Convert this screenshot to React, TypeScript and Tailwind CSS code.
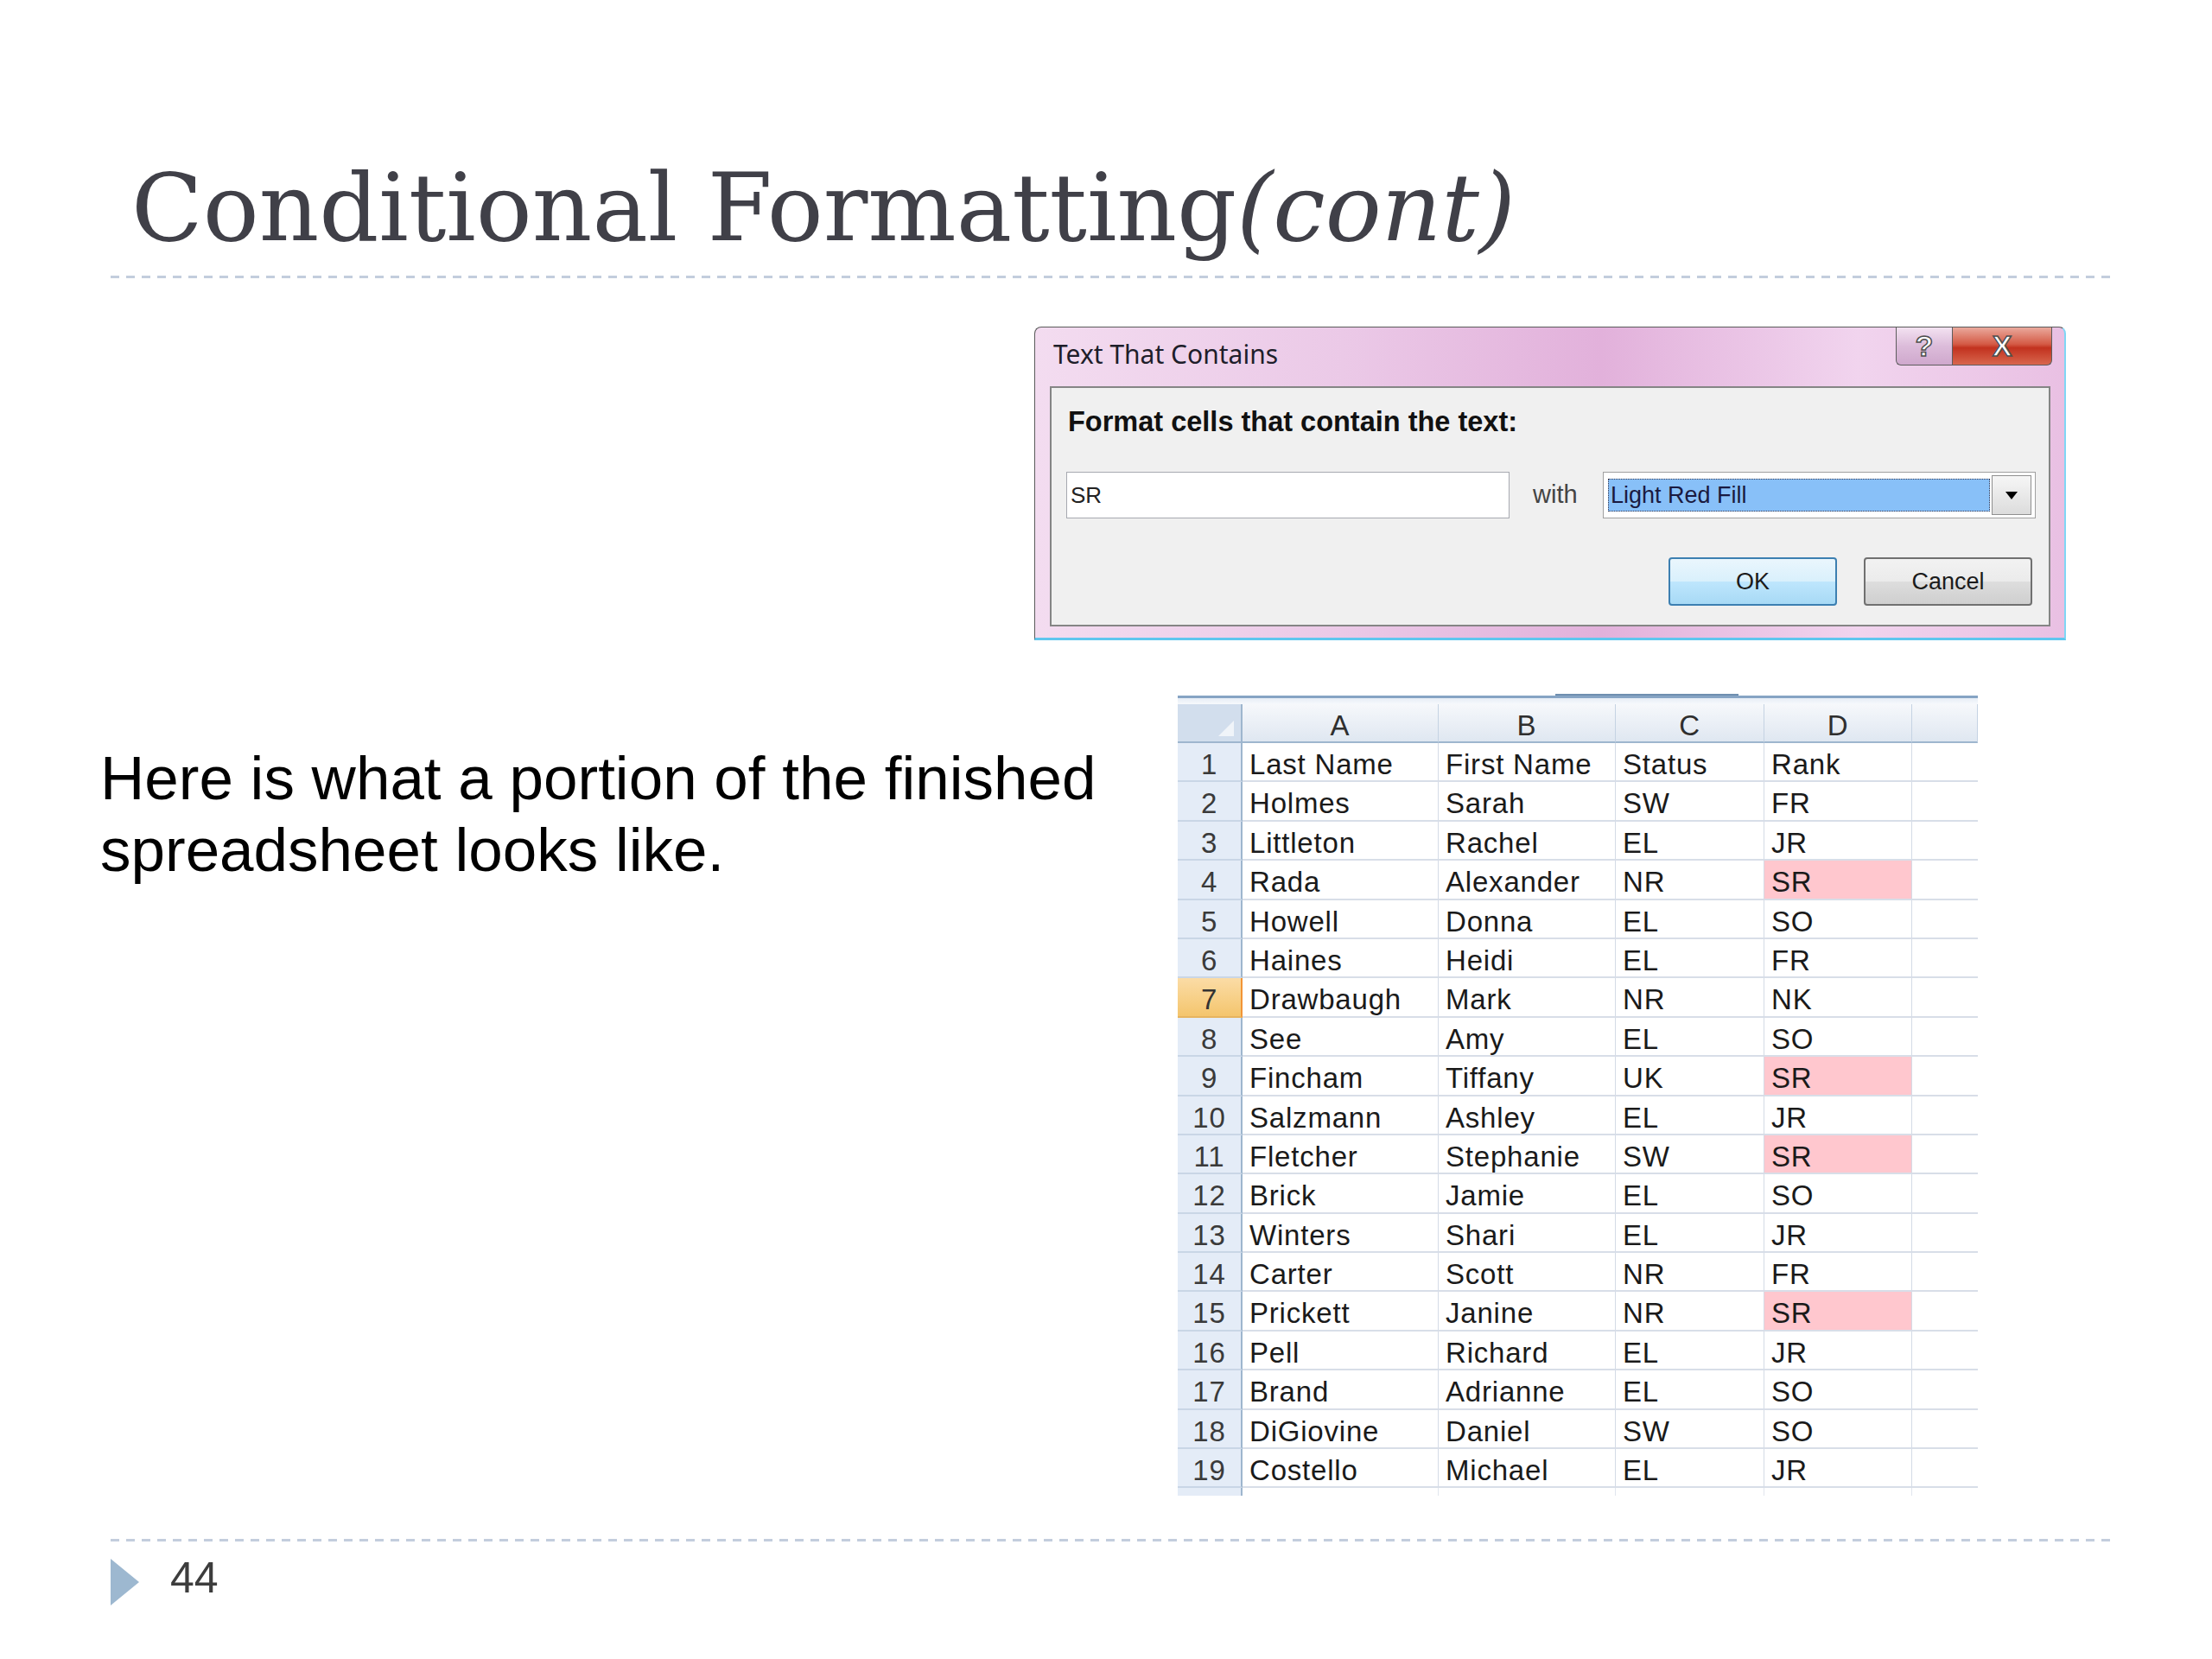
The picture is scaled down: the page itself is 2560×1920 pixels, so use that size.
import React from 'react';

type Row = [string, string, string, string];

const rows: Row[] = [
    ['Last Name', 'First Name', 'Status', 'Rank'],
    ['Holmes', 'Sarah', 'SW', 'FR'],
    ['Littleton', 'Rachel', 'EL', 'JR'],
    ['Rada', 'Alexander', 'NR', 'SR'],
    ['Howell', 'Donna', 'EL', 'SO'],
    ['Haines', 'Heidi', 'EL', 'FR'],
    ['Drawbaugh', 'Mark', 'NR', 'NK'],
    ['See', 'Amy', 'EL', 'SO'],
    ['Fincham', 'Tiffany', 'UK', 'SR'],
    ['Salzmann', 'Ashley', 'EL', 'JR'],
    ['Fletcher', 'Stephanie', 'SW', 'SR'],
    ['Brick', 'Jamie', 'EL', 'SO'],
    ['Winters', 'Shari', 'EL', 'JR'],
    ['Carter', 'Scott', 'NR', 'FR'],
    ['Prickett', 'Janine', 'NR', 'SR'],
    ['Pell', 'Richard', 'EL', 'JR'],
    ['Brand', 'Adrianne', 'EL', 'SO'],
    ['DiGiovine', 'Daniel', 'SW', 'SO'],
    ['Costello', 'Michael', 'EL', 'JR'],
];

const colW = ['w-[227px]', 'w-[205px]', 'w-[172px]', 'w-[171px]'];

function DashedRule() {
    return (
        <div className="ml-[128px] w-[2317px] h-[3px] bg-[repeating-linear-gradient(90deg,#c3cddd_0px,#c3cddd_10px,transparent_10px,transparent_18px)]" />
    );
}

function Dialog() {
    return (
        <div className="ml-[1197px] mt-[56px] w-[1194px] h-[363px] flex flex-col rounded-t-[8px] border-t border-l border-[#5a5a5a] border-r-2 border-r-[#7fd6f5] border-b-[3px] border-b-[#5fc6ee] bg-[linear-gradient(90deg,#f3dcf0_0%,#ebc9e7_30%,#e2b1db_55%,#f1d4ee_80%,#e9c0e3_100%)]">
            {/* Title bar */}
            <div className="h-[68px] flex justify-between">
                <div className="pl-[21px] pt-[16px] font-['Noto_Sans',sans-serif] text-[30px] leading-[30px] text-[#1e1e2a]">
                    Text That Contains
                </div>
                <div className="flex mr-[14px] h-[44px]">
                    <div className="w-[65px] h-[44px] flex items-center justify-center border-b border-l border-[#5d5d5d] rounded-bl-[6px] bg-[linear-gradient(180deg,#f3e2f1,#dcbcda_50%,#cfa8cd)] font-['Liberation_Sans',sans-serif] font-bold text-[34px] text-white [-webkit-text-stroke:1.5px_#4f4f4f]">
                        ?
                    </div>
                    <div className="w-[116px] h-[44px] flex items-center justify-center border-b border-r border-l border-[#5d5d5d] rounded-br-[6px] bg-[linear-gradient(180deg,#eaa99c,#d45a45_45%,#c2321f_55%,#d8664d)] font-['Liberation_Sans',sans-serif] font-bold text-[34px] text-white [-webkit-text-stroke:1.5px_#4f4f4f]">
                        X
                    </div>
                </div>
            </div>

            {/* Client area */}
            <div className="ml-[17px] mr-[16px] h-[278px] border-2 border-[#858585] bg-[#f0f0f0] flex flex-col font-['Liberation_Sans',sans-serif]">
                <div className="pl-[19px] mt-[24px] text-[32.5px] leading-[31px] font-bold text-[#111]">
                    Format cells that contain the text:
                </div>
                <div className="mt-[42px] h-[54px] flex items-center pl-[17px]">
                    <div className="w-[513px] h-[54px] bg-white border border-[#a7a9b0] flex items-center pl-[4px] text-[26px] text-[#222]">
                        SR
                    </div>
                    <div className="w-[108px] pl-[27px] text-[29px] text-[#444]">with</div>
                    <div className="w-[501px] h-[54px] bg-white border border-[#a0a0a0] flex items-center">
                        <div className="ml-[5px] w-[442px] h-[38px] bg-[#88c0f8] border border-dotted border-[#3a3a50] flex items-center pl-[2px] text-[27px] text-[#1a1a40]">
                            Light Red Fill
                        </div>
                        <div className="ml-[2px] w-[46px] h-[46px] border border-[#8f8f8f] bg-[linear-gradient(180deg,#f6f6f6,#dcdcdc)] flex items-center justify-center">
                            <div className="w-0 h-0 border-t-[9px] border-t-black border-x-[7px] border-x-transparent" />
                        </div>
                    </div>
                </div>
                <div className="mt-[45px] h-[56px] flex justify-end gap-[31px] pr-[19px]">
                    <div className="w-[195px] h-[56px] rounded-[4px] border-2 border-[#3c7fb1] bg-[linear-gradient(180deg,#eaf6fd,#d9f0fc_50%,#bee6fd_51%,#a7d9f5)] flex items-center justify-center text-[27px] text-[#1b1b1b]">
                        OK
                    </div>
                    <div className="w-[195px] h-[56px] rounded-[4px] border-2 border-[#707070] bg-[linear-gradient(180deg,#f2f2f2,#ebebeb_50%,#dddddd_51%,#cfcfcf)] flex items-center justify-center text-[27px] text-[#1b1b1b]">
                        Cancel
                    </div>
                </div>
            </div>
        </div>
    );
}

function Sheet() {
    const cellText = "font-['Liberation_Sans',sans-serif] text-[33px] tracking-[0.8px] leading-[37px] pt-[6px]";
    return (
        <div className="w-[926px] flex flex-col">
            {/* top border with tab */}
            <div className="h-[2px] flex">
                <div className="ml-[437px] w-[212px] h-[2px] bg-[#6f8fb0]" />
            </div>
            <div className="h-[3px] bg-[#86a4c4]" />
            <div className="h-[7px] bg-[linear-gradient(180deg,#e6edf6,#f7f9fc)]" />

            {/* column header */}
            <div className="flex h-[45px]">
                <div className="w-[75px] h-[45px] bg-[#d2deed] border-r-2 border-b-2 border-[#9eb6ce] flex items-end justify-end pr-[8px] pb-[6px]">
                    <div className="w-0 h-0 border-b-[18px] border-b-[#f0f4f9] border-l-[18px] border-l-transparent" />
                </div>
                {['A', 'B', 'C', 'D', ''].map((l, i) => (
                    <div
                        key={i}
                        className={`${i < 4 ? colW[i] : 'w-[76px]'} h-[45px] border-r border-b-2 border-r-[#c5d3e3] border-b-[#9eb6ce] bg-[linear-gradient(180deg,#f6f8fb,#dfe7f1)] text-center text-[#2f2f2f] ${cellText}`}
                    >
                        {l}
                    </div>
                ))}
            </div>

            {rows.map((r, ri) => {
                const n = ri + 1;
                const sel = n === 7;
                return (
                    <div key={n} className="flex h-[45.4px]">
                        <div
                            className={`w-[75px] h-[45.4px] border-r-2 border-b-2 text-center ${cellText} ${
                                sel
                                    ? 'bg-[linear-gradient(180deg,#fbdca6,#f4c56d)] border-r-[#f29436] border-b-[#e6b45f] text-[#333]'
                                    : 'bg-[#e4ecf7] border-r-[#9eb6ce] border-b-[#c9d6e6] text-[#3a3a3a]'
                            }`}
                        >
                            {n}
                        </div>
                        {r.map((c, ci) => {
                            const pink = ci === 3 && c === 'SR';
                            return (
                                <div
                                    key={ci}
                                    className={`${colW[ci]} h-[45.4px] border-r border-b-2 border-r-[#d4dbe6] border-b-[#d8dee8] pl-[8px] text-[#1a1a1a] whitespace-nowrap ${cellText} ${
                                        pink ? 'bg-[#ffc7ce]' : 'bg-white'
                                    }`}
                                >
                                    {c}
                                </div>
                            );
                        })}
                        <div className="w-[76px] h-[45.4px] border-b-2 border-[#d8dee8] bg-white" />
                    </div>
                );
            })}

            {/* partial row 20 */}
            <div className="flex h-[9px]">
                <div className="w-[75px] bg-[#e4ecf7] border-r-2 border-[#9eb6ce]" />
                {colW.map((w, i) => (
                    <div key={i} className={`${w} border-r border-[#e1e6ee]`} />
                ))}
            </div>
        </div>
    );
}

export default function App() {
    return (
        <div className="w-[2560px] h-[1920px] bg-white flex flex-col overflow-hidden">
            <h1 className="mt-[187px] ml-[152px] h-[108px] font-['DejaVu_Serif',serif] text-[108px] leading-[108px] text-[#404048] whitespace-nowrap">
                Conditional Formatting<span className="italic">(cont)</span>
            </h1>
            <div className="mt-[24px]">
                <DashedRule />
            </div>

            <div className="h-[1459px] flex flex-col">
                <Dialog />
                <div className="mt-[62px] flex">
                    <div className="w-[1363px] pl-[116px] pt-[56px]">
                        <p className="font-['Liberation_Sans',sans-serif] text-[71px] leading-[83px] text-black whitespace-nowrap">
                            Here is what a portion of the finished
                            <br />
                            spreadsheet looks like.
                        </p>
                    </div>
                    <Sheet />
                </div>
            </div>

            <DashedRule />
            <div className="mt-[20px] ml-[128px] flex items-center">
                <div className="w-0 h-0 border-l-[33px] border-l-[#9db8d0] border-y-[27px] border-y-transparent" />
                <div className="ml-[36px] font-['Liberation_Sans',sans-serif] text-[50px] leading-[50px] text-[#3d3d3d] -mt-[10px]">
                    44
                </div>
            </div>
        </div>
    );
}
